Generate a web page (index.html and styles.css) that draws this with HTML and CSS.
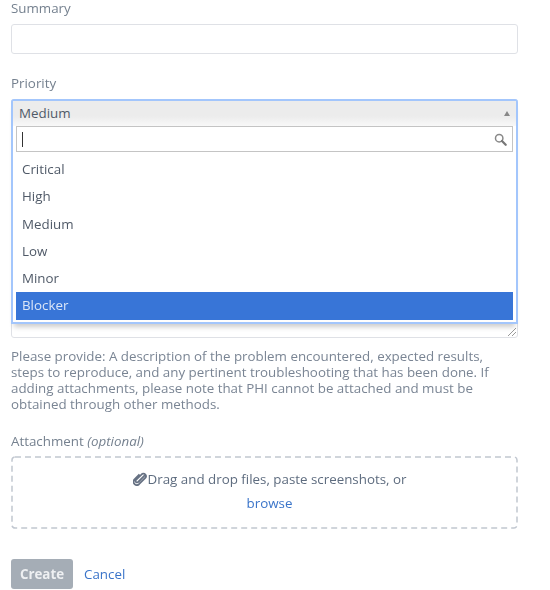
FILE: index.html
```html
<!DOCTYPE html>
<html lang="en">
<head>
  <meta charset="UTF-8">
  <title>Create issue</title>
  <link rel="stylesheet" href="styles.css">
</head>
<body>

  <form class="issue-form">
    <div class="field field-summary">
      <label class="field-label" for="summary">Summary</label>
      <input class="text-input" type="text" id="summary">
    </div>

    <div class="field field-priority">
      <div class="field-label">Priority</div>
      <div class="select-wrap">
        <!-- Open dropdown lies over the description box -->
        <div class="select-open">
          <div class="select-current">
            <span>Medium</span>
            <span class="select-arrow"></span>
          </div>
          <div class="select-search">
            <span class="caret"></span>
            <svg class="search-icon" width="13" height="13" viewBox="0 0 14 14">
              <circle cx="5.6" cy="5.6" r="4" fill="none" stroke="#888" stroke-width="1.6"/>
              <path d="M8.6 8.6 L12.6 12.6" stroke="#777" stroke-width="2.4" stroke-linecap="round"/>
            </svg>
          </div>
          <ul class="select-list">
            <li>Critical</li>
            <li>High</li>
            <li>Medium</li>
            <li>Low</li>
            <li>Minor</li>
            <li class="selected">Blocker</li>
          </ul>
        </div>
      </div>
      <div class="description-box">
        <svg class="resize-grip" width="10" height="10" viewBox="0 0 10 10">
          <path d="M1 9 L9 1 M5 9 L9 5" stroke="#999" stroke-width="1"/>
        </svg>
      </div>
    </div>

    <p class="help-text">Please provide: A description of the problem encountered, expected results, steps to reproduce, and any pertinent troubleshooting that has been done. If adding attachments, please note that PHI cannot be attached and must be obtained through other methods.</p>

    <div class="field field-attachment">
      <div class="field-label">Attachment <em>(optional)</em></div>
      <div class="drop-zone">
        <svg class="drop-border" width="507" height="73">
          <rect x="1" y="1" width="505" height="71" rx="3" fill="none" stroke="#c1c7d0" stroke-width="1.5" stroke-dasharray="6 4"/>
        </svg>
        <div class="drop-line">
          <svg class="clip-icon" width="14" height="14" viewBox="0 0 14 14">
            <path d="M12 3.2 L5.2 10 a1.5 1.5 0 0 1 -2.2 -2.1 L9.2 1.9 a2.6 2.6 0 0 1 3.3 3.8 L6 12.2 a3.3 3.3 0 0 1 -4.7 -4.6 L6.5 2.4" fill="none" stroke="#667183" stroke-width="1.8"/>
          </svg>
          <span>Drag and drop files, paste screenshots, or</span>
        </div>
        <a class="link" href="#">browse</a>
      </div>
    </div>

    <div class="form-actions">
      <button type="button" class="create-btn">Create</button>
      <a class="link" href="#">Cancel</a>
    </div>
  </form>

</body>
</html>
```

FILE: styles.css
```css
body {
  margin: 0;
  background-color: #fff;
  font-family: "Open Sans", "Noto Sans", sans-serif;
  font-size: 13.35px;
  color: #5e6c7f;
}

/* the screenshot is a little soft */
.issue-form {
  width: 507px;
  margin-left: 11px;
  padding-top: 1px;
  filter: blur(0.35px);
}

.field-label {
  display: block;
  height: 18px;
  line-height: 15px;
  margin-bottom: 5px;
  color: #75818f;
}

.field-label em {
  font-style: italic;
}

.text-input {
  display: block;
  box-sizing: border-box;
  width: 100%;
  height: 30px;
  border: 1px solid #dfe1e6;
  border-radius: 3px;
  background-color: #fff;
}

.field-priority {
  margin-top: 22px;
}

.select-wrap {
  position: relative;
  height: 0;
}

.select-open {
  position: absolute;
  top: 0;
  left: 0;
  right: 0;
  z-index: 2;
  box-sizing: border-box;
  height: 225px;
  background-color: #fff;
  border: 2px solid #a3c6fc;
  border-radius: 3px 3px 0 0;
  box-shadow: 0 6px 5px -3px rgba(0, 0, 0, 0.2);
}

.select-current {
  display: flex;
  justify-content: space-between;
  align-items: center;
  height: 25px;
  padding: 0 6px 1px;
  box-sizing: border-box;
  background: linear-gradient(#ececec 60%, #f8f8f8);
  color: #505a68;
}

.select-arrow {
  width: 0;
  height: 0;
  border-left: 3px solid transparent;
  border-right: 3px solid transparent;
  border-bottom: 5px solid #888;
}

.select-search {
  display: flex;
  justify-content: space-between;
  align-items: center;
  box-sizing: border-box;
  height: 26px;
  margin: 0 3px;
  padding: 0 5px 0 5px;
  border: 1px solid #c4c4c4;
  background-color: #fff;
}

.caret {
  width: 1px;
  height: 15px;
  background-color: #333;
}

.select-list {
  list-style: none;
  margin: 4px 3px 0;
  padding: 0;
  color: #505a68;
}

.select-list li {
  height: 27.3px;
  line-height: 27px;
  padding-left: 6px;
}

.select-list .selected {
  background-color: #3875d7;
  color: #dbe6f7;
}

.description-box {
  position: relative;
  box-sizing: border-box;
  height: 239px;
  border: 1px solid #dfe1e6;
  border-radius: 3px;
}

.resize-grip {
  position: absolute;
  right: 0;
  bottom: 0;
}

.help-text {
  margin: 10px 0 0;
  line-height: 16px;
  color: #7a8594;
}

.field-attachment {
  margin-top: 22px;
}

.field-attachment .field-label {
  margin-bottom: 4px;
}

.drop-zone {
  position: relative;
  box-sizing: border-box;
  height: 73px;
  padding: 11px 0 0 10px;
  text-align: center;
  line-height: 24px;
}

.drop-border {
  position: absolute;
  top: 0;
  left: 0;
}

.drop-line {
  display: flex;
  justify-content: center;
  align-items: center;
  gap: 1px;
}

.link {
  color: #3a74c9;
  text-decoration: none;
}

.form-actions {
  display: flex;
  align-items: center;
  gap: 11px;
  margin-top: 30px;
}

.create-btn {
  width: 62px;
  height: 30px;
  padding: 0;
  border: none;
  border-radius: 3px;
  background-color: #a5adb6;
  color: #eef0f2;
  font-family: inherit;
  font-size: 13.35px;
  font-weight: 700;
}
```
